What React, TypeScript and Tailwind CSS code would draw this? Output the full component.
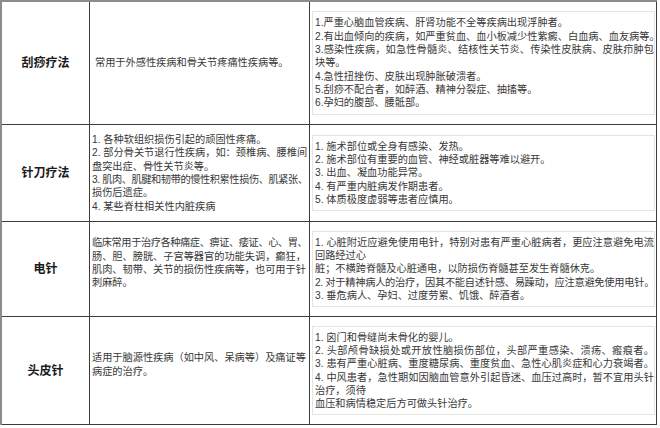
type Line = { t: string; full?: boolean; tight?: boolean };

type Row = {
  label: string;
  height: string;
  usesIndent: boolean;
  liftUse: boolean;
  uses: Line[];
  avoid: Line[];
};

// wrapped lines in the source are justified to the cell edge, so "full" marks them
const rows: Row[] = [
  {
    label: "刮痧疗法",
    height: "h-[123px]",
    usesIndent: true,
    liftUse: false,
    uses: [{ t: "常用于外感性疾病和骨关节疼痛性疾病等。" }],
    avoid: [
      { t: "1.严重心脑血管疾病、肝肾功能不全等疾病出现浮肿者。" },
      { t: "2.有出血倾向的疾病，如严重贫血、血小板减少性紫癜、白血病、血友病等。", full: true },
      { t: "3.感染性疾病，如急性骨髓炎、结核性关节炎、传染性皮肤病、皮肤疖肿包", full: true },
      { t: "块等。" },
      { t: "4.急性扭挫伤、皮肤出现肿胀破溃者。" },
      { t: "5.刮痧不配合者，如醉酒、精神分裂症、抽搐等。" },
      { t: "6.孕妇的腹部、腰骶部。" },
    ],
  },
  {
    label: "针刀疗法",
    height: "h-[97px]",
    usesIndent: false,
    liftUse: false,
    uses: [
      { t: "1. 各种软组织损伤引起的顽固性疼痛。" },
      { t: "2. 部分骨关节退行性疾病，如：颈椎病、腰椎间", full: true },
      { t: "盘突出症、骨性关节炎等。" },
      { t: "3. 肌肉、肌腱和韧带的慢性积累性损伤、肌紧张、", full: true, tight: true },
      { t: "损伤后遗症。" },
      { t: "4. 某些脊柱相关性内脏疾病" },
    ],
    avoid: [
      { t: "1. 施术部位或全身有感染、发热。" },
      { t: "2. 施术部位有重要的血管、神经或脏器等难以避开。" },
      { t: "3. 出血、凝血功能异常。" },
      { t: "4. 有严重内脏病发作期患者。" },
      { t: "5. 体质极度虚弱等患者应慎用。" },
    ],
  },
  {
    label: "电针",
    height: "h-[95px]",
    usesIndent: false,
    liftUse: true,
    uses: [
      { t: "临床常用于治疗各种痛症、痹证、痿证、心、胃、", full: true, tight: true },
      { t: "肠、胆、膀胱、子宫等器官的功能失调，癫狂，", full: true },
      { t: "肌肉、韧带、关节的损伤性疾病等，也可用于针", full: true },
      { t: "刺麻醉。" },
    ],
    avoid: [
      { t: "1. 心脏附近应避免使用电针，特别对患有严重心脏病者，更应注意避免电流", full: true },
      { t: "回路经过心" },
      { t: "脏；不横跨脊髓及心脏通电，以防损伤脊髓甚至发生脊髓休克。" },
      { t: "2. 对于精神病人的治疗，因其不能自述针感、易躁动，应注意避免使用电针。", full: true, tight: true },
      { t: "3. 垂危病人、孕妇、过度劳累、饥饿、醉酒者。" },
    ],
  },
  {
    label: "头皮针",
    height: "h-[108px]",
    usesIndent: false,
    liftUse: true,
    uses: [
      { t: "适用于脑源性疾病（如中风、呆病等）及痛证等", full: true },
      { t: "病症的治疗。" },
    ],
    avoid: [
      { t: "1. 囟门和骨缝尚未骨化的婴儿。" },
      { t: "2. 头部颅骨缺损处或开放性脑损伤部位，头部严重感染、溃疡、瘢痕者。", full: true },
      { t: "3. 患有严重心脏病、重度糖尿病、重度贫血、急性心肌炎症和心力衰竭者。", full: true },
      { t: "4. 中风患者，急性期如因脑血管意外引起昏迷、血压过高时，暂不宜用头针", full: true },
      { t: "治疗，须待" },
      { t: "血压和病情稳定后方可做头针治疗。" },
    ],
  },
];

function TextLines({ lines, width }: { lines: Line[]; width: string }) {
  return (
    <div className={`${width} text-[10.2px] leading-[13.3px] text-[#383838]`}>
      {lines.map((l, i) => (
        <div
          key={i}
          className={`whitespace-nowrap ${l.full ? "[text-align-last:justify]" : ""} ${
            l.tight ? "tracking-[-0.4px]" : ""
          }`}
        >
          {l.t}
        </div>
      ))}
    </div>
  );
}

export default function App() {
  return (
    <div className="min-h-screen w-full bg-white font-['Liberation_Sans','Noto_Sans_CJK_SC',sans-serif]">
      <div className="grid w-[657px] grid-cols-[88px_220px_347px] border-l-2 border-t-2 border-[#8c8c8c]">
        {rows.map((r) => (
          <div key={r.label} className="contents">
            <div
              className={`${r.height} flex items-center justify-center border-b border-r border-[#3c3c3c] text-[12px] font-bold text-[#1a1a1a]`}
            >
              {r.label}
            </div>
            <div
              className={`${r.height} flex items-center border-b border-r border-[#3c3c3c] ${
                r.usesIndent ? "pl-[5px]" : "pl-[2px]"
              } ${r.liftUse ? "pb-[12px]" : ""}`}
            >
              <TextLines lines={r.uses} width={r.usesIndent ? "w-[209px]" : "w-[213px]"} />
            </div>
            <div className={`${r.height} flex items-center border-b border-r border-[#3c3c3c] pl-[2px]`}>
              <div className="w-[343px] border border-[#e4e4e4] py-[4px] pl-[2px]">
                <TextLines lines={r.avoid} width="w-[339px]" />
              </div>
            </div>
          </div>
        ))}
      </div>
    </div>
  );
}
